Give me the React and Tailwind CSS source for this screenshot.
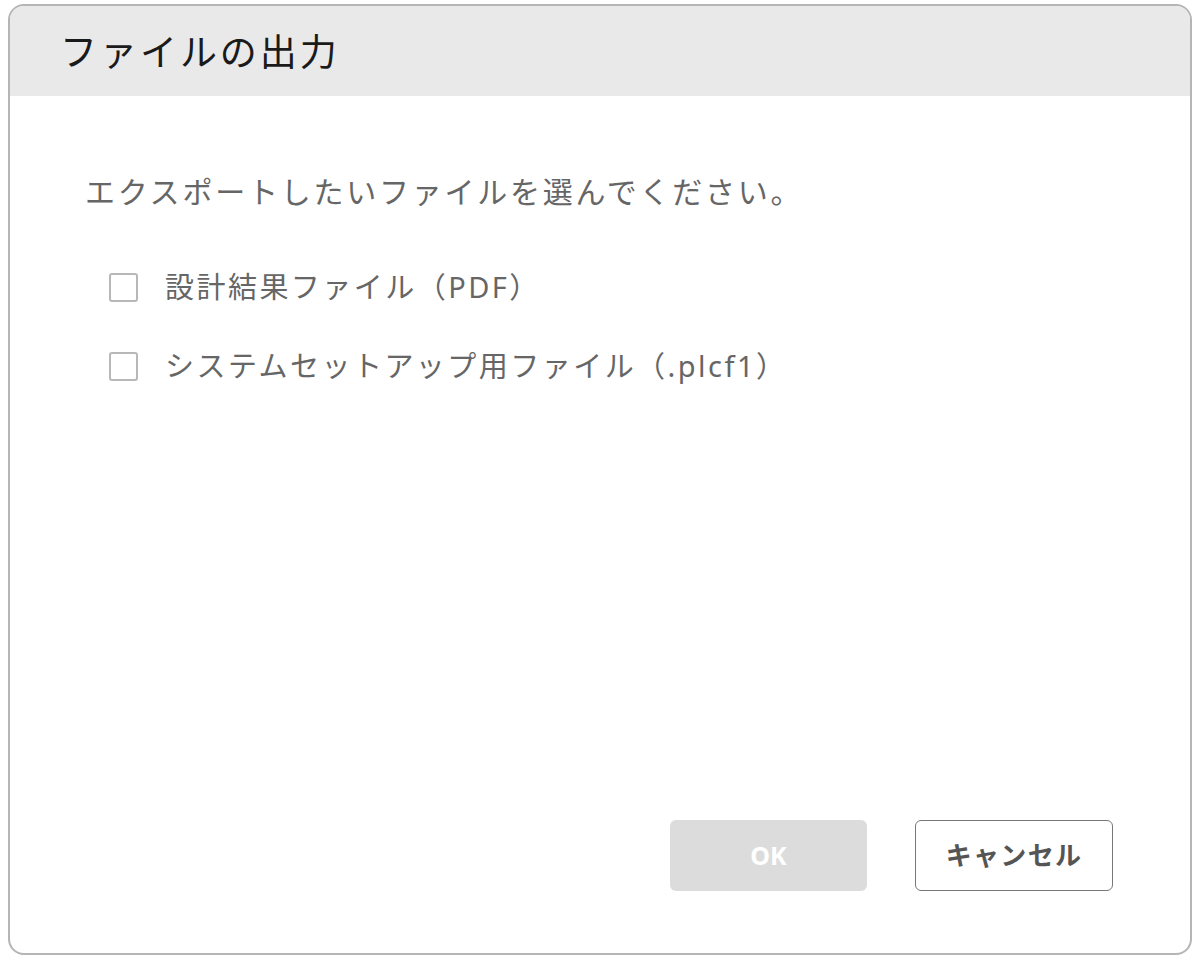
export default function App() {
  const font = { fontFamily: '"Noto Sans", "Noto Sans CJK JP", sans-serif' };
  return (
    <div className="w-[1198px] h-[958px] bg-white pt-[4px] pl-[8px]" style={font}>
      <div className="w-[1184px] h-[951px] border-2 border-[#b5b5b5] rounded-[16px] overflow-hidden flex flex-col bg-white">
        <div className="h-[90px] bg-[#e9e9e9] flex items-center pl-[50px] shrink-0">
          <span className="text-[37px] tracking-[0.08em] text-[#1a1a1a] leading-none">ファイルの出力</span>
        </div>
        <div className="flex-1 flex flex-col pl-[75px] pt-[76px]">
          <p className="text-[30px] tracking-[0.092em] text-[#666] leading-[40px]">
            エクスポートしたいファイルを選んでください。
          </p>
          <div className="flex flex-col gap-[39px] mt-[55px] pl-[24px]">
            {["設計結果ファイル（PDF）", "システムセットアップ用ファイル（.plcf1）"].map((t) => (
              <label key={t} className="flex items-center gap-[27px]">
                <span className="w-[29px] h-[29px] border-2 border-[#b8b8b8] rounded-[3px] bg-white shrink-0" />
                <span className="text-[29px] tracking-[0.085em] text-[#666] leading-[40px]">{t}</span>
              </label>
            ))}
          </div>
          <div className="flex-1" />
          <div className="flex justify-end gap-[48px] pr-[77px] pb-[62px]">
            <button className="w-[197px] h-[71px] rounded-[6px] bg-[#dcdcdc] text-white font-bold text-[25px]">
              OK
            </button>
            <button className="w-[198px] h-[71px] rounded-[6px] border-[1.5px] border-[#777] bg-white text-[#555] font-bold text-[26px] tracking-[0.05em]">
              キャンセル
            </button>
          </div>
        </div>
      </div>
    </div>
  );
}
